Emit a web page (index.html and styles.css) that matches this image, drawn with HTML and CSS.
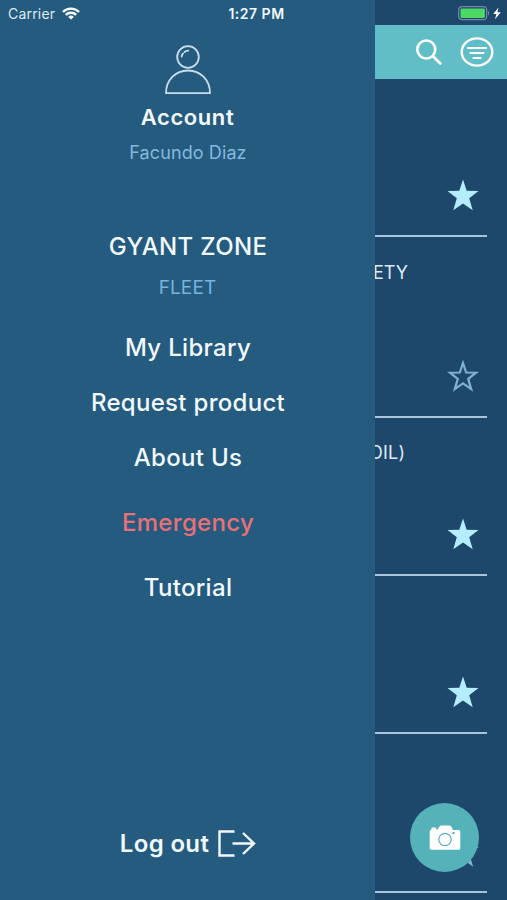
FILE: index.html
```html
<!DOCTYPE html>
<html lang="en">
<head>
<meta charset="UTF-8" />
<meta name="viewport" content="width=device-width, initial-scale=1" />
<title>Menu</title>
<link rel="stylesheet" href="styles.css">
</head>
<body>
<div class="screen">
  <div class="statusbar">
    <div class="signal">
      <span class="carrier">Carrier</span>
      <svg width="18" height="13" viewBox="0 0 18 13" fill="none" stroke="#fff" stroke-width="2.3">
        <path d="M1 5a11.3 11.3 0 0 1 16 0"/>
        <path d="M3.8 7.9a7.4 7.4 0 0 1 10.4 0"/>
        <path d="M9 12.6L6.2 9.9a4 4 0 0 1 5.6 0z" fill="#fff" stroke="none"/>
      </svg>
    </div>
    <span class="time">1:27 PM</span>
    <svg class="battery" width="45" height="15" viewBox="0 0 45 15">
      <rect x="0.7" y="0.7" width="28" height="13" rx="3.4" fill="none" stroke="#7388a3" stroke-width="1.2"/>
      <rect x="2.5" y="2.5" width="24.4" height="9.4" rx="1.4" fill="#4cd964"/>
      <path d="M30 5v4.6c1.6-.5 1.6-4.1 0-4.6z" fill="#7388a3"/>
      <path d="M40.5 1.5l-5.3 6.4h3.2L37 13.2l5.8-7h-3.4z" fill="#fff"/>
    </svg>
  </div>

  <nav class="drawer">
    <svg class="avatar" width="48" height="50" viewBox="0 0 48 50" fill="none" stroke="#c9dff0" stroke-width="1.8" stroke-linejoin="round" stroke-linecap="round">
      <circle cx="24" cy="12" r="10.8"/>
      <path d="M17.6 11.5c.2-1.3.7-2.3 1.5-3.1M20.6 7c1-.8 2.2-1.3 3.7-1.4"/>
      <path d="M2 48.2C2 35 11.500 25.500 24 25.500S46 35 46 48.200z"/>
    </svg>
    <div class="account">Account</div>
    <div class="user">Facundo Diaz</div>
    <div class="zone">GYANT ZONE</div>
    <div class="fleet">FLEET</div>
    <a class="link library">My Library</a>
    <a class="link request">Request product</a>
    <a class="link about">About Us</a>
    <a class="link emergency">Emergency</a>
    <a class="link tutorial">Tutorial</a>
    <a class="logout">
      <span class="label">Log out</span>
      <svg width="38" height="27" viewBox="0 0 38 27" fill="none" stroke="#f2f9ff" stroke-width="2.4">
        <path d="M16.5 1.500H1.500v24h15M14.500 13.500H36M25 3l11 10.500L25 24"/>
      </svg>
    </a>
  </nav>

  <main class="feed">
    <header class="toolbar">
      <svg width="27" height="27" viewBox="0 0 27 27" fill="none" stroke="#fff" stroke-width="2.6" stroke-linecap="round">
        <circle cx="11.3" cy="10.5" r="9"/>
        <path d="M18 17.3l7.3 7.2"/>
      </svg>
      <svg width="34" height="30" viewBox="0 0 34 30" fill="none" stroke="#fff" stroke-width="2.4" stroke-linecap="round">
        <ellipse cx="17" cy="15" rx="15.3" ry="13.6"/>
        <path d="M8 11h18M10.500 16h13M13.500 21h7" stroke-width="2.2"/>
      </svg>
    </header>
    <div class="row">
      <svg class="star" width="32" height="32" viewBox="0 0 32 32"><path d="M16 .5l3.7 11.3 11.8.2-9.3 7.2 3.5 12L16 24.500l-9.700 6.700 3.500-12L.5 12l11.800-.2z"/></svg>
    </div>
    <div class="row tall">
      <span class="name">ETY</span>
      <svg class="star outline" width="32" height="32" viewBox="0 0 32 32"><path d="M16 3l3.200 9.500 9.900.2-7.900 6.100 3 10.300L16 23.300l-8.200 5.800 3-10.300-7.900-6.100 9.900-.2z"/></svg>
    </div>
    <div class="row">
      <span class="name oil">OIL)</span>
      <svg class="star" width="32" height="32" viewBox="0 0 32 32"><path d="M16 .5l3.7 11.3 11.8.2-9.3 7.2 3.5 12L16 24.500l-9.700 6.700 3.500-12L.5 12l11.800-.2z"/></svg>
    </div>
    <div class="row">
      <svg class="star" width="32" height="32" viewBox="0 0 32 32"><path d="M16 .5l3.7 11.3 11.8.2-9.3 7.2 3.5 12L16 24.500l-9.700 6.700 3.500-12L.5 12l11.800-.2z"/></svg>
    </div>
    <div class="row">
      <svg class="star outline" width="32" height="32" viewBox="0 0 32 32"><path d="M16 3l3.200 9.500 9.900.2-7.900 6.100 3 10.300L16 23.300l-8.200 5.800 3-10.300-7.900-6.100 9.900-.2z"/></svg>
    </div>
  </main>

  <button class="camera">
    <svg width="32" height="26" viewBox="0 0 32 26">
      <path d="M2.5 4.5V3.6c0-.6.5-1 1-1h2.600c.6 0 1 .4 1 1v.9H8.500L10.500 1.500c.4-.7 1-1 1.700-1h8.200c.8 0 1.400.3 1.800 1l1.900 3.500h5.400c1 0 1.800.8 1.800 1.800V23c0 1-.8 1.800-1.800 1.800h-27C1.500 24.800.7 24 .7 23V6.500c0-1 .8-2 1.800-2z" fill="#fff"/>
      <circle cx="16" cy="14.5" r="6.2" fill="none" stroke="#55b2b8" stroke-width="1.2"/>
      <circle cx="24.5" cy="8" r="1.1" fill="#3c8da0"/>
    </svg>
  </button>
</div>
</body>
</html>
```
FILE: styles.css
```css
body {
  margin: 0;
  font-family: Inter, "Liberation Sans", sans-serif;
  background: #1e486b;
  color: #f2f9ff;
}
.screen {
  position: relative;
  display: flex;
  width: 507px;
  height: 900px;
  overflow: hidden;
}

/* status bar lies over the drawer and the feed */
.statusbar {
  position: absolute;
  top: 0;
  left: 0;
  z-index: 2;
  box-sizing: border-box;
  display: grid;
  grid-template-columns: 1fr auto 1fr;
  align-items: center;
  width: 507px;
  height: 27px;
  padding: 0 4px 0 8px;
}
.signal {
  display: flex;
  align-items: center;
  gap: 7px;
}
.carrier {
  font-size: 14px;
  letter-spacing: 0.2px;
  color: #dfeaf3;
}
.time {
  padding-left: 2px;
  font-size: 14px;
  font-weight: 600;
  letter-spacing: 0.5px;
}
.battery {
  justify-self: end;
}

.drawer {
  display: flex;
  flex-direction: column;
  align-items: center;
  flex: none;
  box-sizing: border-box;
  width: 375px;
  height: 900px;
  padding-top: 45px;
  background: #245b7e;
}
.account {
  margin-top: 7px;
  font-size: 22px;
  font-weight: 600;
  line-height: 30px;
  letter-spacing: 0.6px;
}
.user {
  margin-top: 9px;
  padding-left: 1px;
  font-size: 18px;
  line-height: 24px;
  letter-spacing: 0.1px;
  color: #84b9df;
}
.zone {
  margin-top: 67px;
  padding-left: 1px;
  font-size: 24px;
  font-weight: 500;
  line-height: 30px;
  letter-spacing: 0.35px;
}
.fleet {
  margin-top: 14px;
  font-size: 19px;
  line-height: 24px;
  letter-spacing: 0.1px;
  color: #79b3dc;
}
.link {
  padding-left: 1px;
  font-size: 24px;
  font-weight: 500;
  line-height: 30px;
  letter-spacing: 0.3px;
}
.library {
  margin-top: 33px;
}
.request,
.about {
  margin-top: 25px;
}
.emergency {
  margin-top: 35px;
  color: #ea7077;
}
.tutorial {
  margin-top: 35px;
}
.logout {
  display: flex;
  align-items: center;
  gap: 9px;
  margin-top: auto;
  margin-bottom: 41px;
  padding-left: 1px;
  font-size: 24px;
  font-weight: 600;
  line-height: 30px;
  letter-spacing: 0.35px;
}
.label {
  padding-top: 2px;
}

.feed {
  flex: 1;
  overflow: hidden;
  padding-top: 25px;
}
.toolbar {
  display: flex;
  align-items: center;
  justify-content: flex-end;
  gap: 18px;
  height: 54px;
  padding-right: 13px;
  background: #62bec6;
}
.row {
  display: flex;
  flex-direction: column;
  box-sizing: border-box;
  width: 112px;
  height: 158.3px;
  padding: 24px 8px 24px 0;
  border-bottom: 2px solid #a9c5dd;
}
.tall {
  height: 180.5px;
}
.name {
  margin-left: -2px;
  font-size: 18px;
  line-height: 24px;
  color: #dfeaf3;
}
.oil {
  margin-top: -1px;
  margin-left: -6px;
  letter-spacing: 0.2px;
}
.star {
  align-self: flex-end;
  margin-top: auto;
  fill: #b3edff;
}
.outline {
  fill: none;
  stroke: #7fb2d3;
  stroke-width: 2.2;
}

/* floating button over the list */
.camera {
  position: absolute;
  right: 28px;
  bottom: 28px;
  display: flex;
  align-items: center;
  justify-content: center;
  width: 69px;
  height: 69px;
  padding: 0;
  border: none;
  border-radius: 50%;
  background: #55b2b8;
}
```
